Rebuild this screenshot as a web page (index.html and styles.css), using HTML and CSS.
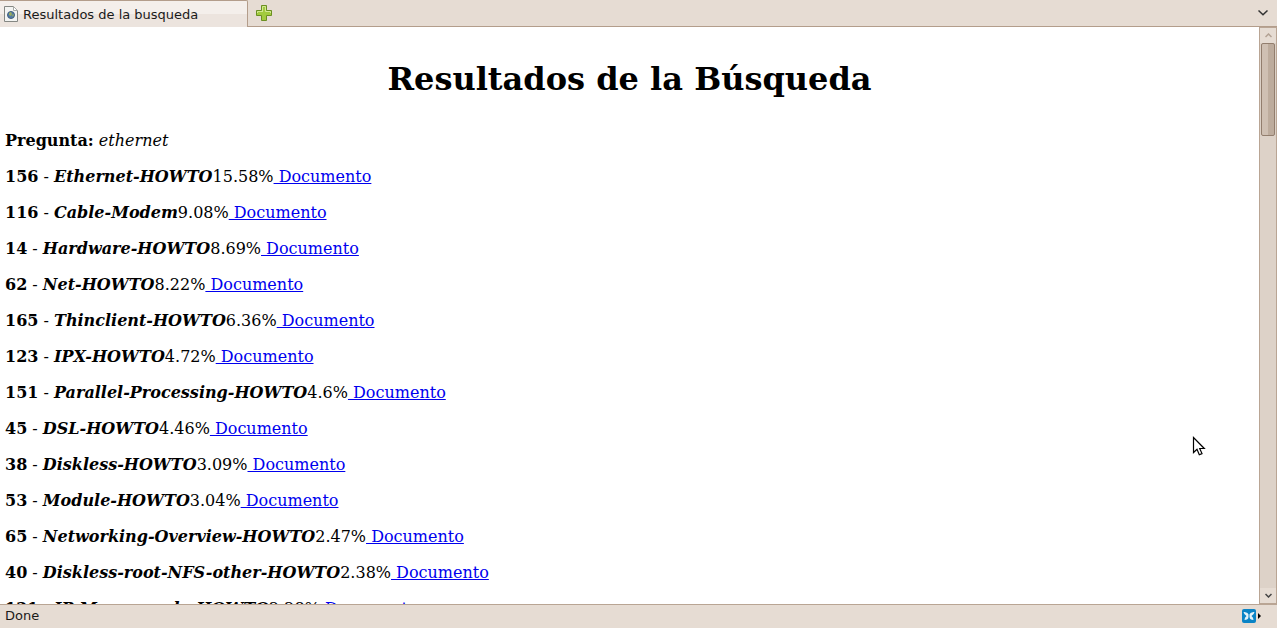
FILE: index.html
```html
<!DOCTYPE html>
<html lang="es">
<head>
<meta charset="utf-8">
<title>Resultados de la busqueda</title>
<link rel="stylesheet" href="styles.css">
</head>
<body class="browser">
<header class="tabbar">
  <button class="tab" type="button">
    <svg class="tab-icon" width="14" height="16" viewBox="0 0 14 16">
      <path d="M.5.5h9l4 4v11H.5z" fill="#f3f4f2" stroke="#858783"/>
      <path d="M9.500.5v4h4z" fill="#fff" stroke="#a8aaa6"/>
      <circle cx="7" cy="9" r="3.500" fill="#527aa8" stroke="#42607e"/>
      <path d="M5 7l2-1 1 2-1 2-2-1zM8 9l2-1-1 3z" fill="#9cae58"/>
    </svg>
    <span>Resultados de la busqueda</span>
  </button>
  <button class="icon-button new-tab" type="button" aria-label="Nueva pestaña">
    <svg width="16" height="16" viewBox="0 0 16 16">
      <path d="M5.500.5h5v5h5v5h-5v5h-5v-5h-5v-5h5z" fill="#a2cb3e" stroke="#6b8f22"/>
      <path d="M6.500 7V1.500h3v5h5V8M1.500 8V6.500h5" fill="none" stroke="#d2e893"/>
    </svg>
  </button>
  <button class="icon-button tab-list" type="button" aria-label="Lista de pestañas">
    <svg width="10" height="6" viewBox="0 0 10 6"><path d="M.5.5L5 4.800 9.500.5" fill="none" stroke="#333" stroke-width="1.500"/></svg>
  </button>
</header>
<div class="viewport">
  <main class="page">
    <h1 class="title">Resultados de la Búsqueda</h1>
    <p class="line"><b>Pregunta:</b> <i>ethernet</i></p>
    <p class="line"><b>156</b> - <b><i>Ethernet-HOWTO</i></b>15.58%<a href="#"> Documento</a></p>
    <p class="line"><b>116</b> - <b><i>Cable-Modem</i></b>9.08%<a href="#"> Documento</a></p>
    <p class="line"><b>14</b> - <b><i>Hardware-HOWTO</i></b>8.69%<a href="#"> Documento</a></p>
    <p class="line"><b>62</b> - <b><i>Net-HOWTO</i></b>8.22%<a href="#"> Documento</a></p>
    <p class="line"><b>165</b> - <b><i>Thinclient-HOWTO</i></b>6.36%<a href="#"> Documento</a></p>
    <p class="line"><b>123</b> - <b><i>IPX-HOWTO</i></b>4.72%<a href="#"> Documento</a></p>
    <p class="line"><b>151</b> - <b><i>Parallel-Processing-HOWTO</i></b>4.6%<a href="#"> Documento</a></p>
    <p class="line"><b>45</b> - <b><i>DSL-HOWTO</i></b>4.46%<a href="#"> Documento</a></p>
    <p class="line"><b>38</b> - <b><i>Diskless-HOWTO</i></b>3.09%<a href="#"> Documento</a></p>
    <p class="line"><b>53</b> - <b><i>Module-HOWTO</i></b>3.04%<a href="#"> Documento</a></p>
    <p class="line"><b>65</b> - <b><i>Networking-Overview-HOWTO</i></b>2.47%<a href="#"> Documento</a></p>
    <p class="line"><b>40</b> - <b><i>Diskless-root-NFS-other-HOWTO</i></b>2.38%<a href="#"> Documento</a></p>
    <p class="line"><b>121</b> - <b><i>IP-Masquerade-HOWTO</i></b>2.28%<a href="#"> Documento</a></p>
  </main>
  <div class="scrollbar">
    <button class="scroll-button" type="button" aria-label="Subir">
      <svg width="7" height="5" viewBox="0 0 7 5"><path d="M.5 4l3-3 3 3" fill="none" stroke="#b3a294" stroke-width="1.500"/></svg>
    </button>
    <div class="track"><div class="thumb"></div></div>
    <button class="scroll-button" type="button" aria-label="Bajar">
      <svg width="7" height="5" viewBox="0 0 7 5"><path d="M.5 1l3 3 3-3" fill="none" stroke="#444" stroke-width="1.500"/></svg>
    </button>
  </div>
</div>
<footer class="statusbar">
  <span>Done</span>
  <button class="icon-button addon" type="button" aria-label="Complemento">
    <svg width="20" height="14" viewBox="0 0 20 14">
      <rect width="14" height="14" rx="2" fill="#0a84c6"/>
      <path d="M1.500 3q3.500-.5 5.500 2.500 2-3 5.500-2.500-.5 2.500-3 4 2 1.500 2 4-3.500 0-4.500-3-1 3-4.500 3 0-2.500 2-4-2.500-1.500-3-4z" fill="#e4f3fa"/>
      <path d="M7 2v10" stroke="#0a84c6"/>
      <path d="M16 4l3 3-3 3z" fill="#000"/>
    </svg>
  </button>
</footer>
<svg class="pointer" width="14" height="21" viewBox="0 0 14 21">
  <path d="M1.500 1.500v15l3.500-3.300 2.300 5.600 2.700-1.200-2.300-5.100h4.600z" fill="#fff" stroke="#000" stroke-width="1.200"/>
</svg>
</body>
</html>
```
FILE: styles.css
```css
* { box-sizing: border-box; }
.browser {
  margin: 0;
  height: 100vh;
  display: flex;
  flex-direction: column;
  overflow: hidden;
  background: #e6dcd3;
  color: #1a1a1a;
  font-family: "DejaVu Sans", sans-serif;
  font-size: 13px;
}
button {
  margin: 0;
  padding: 0;
  border: 0;
  background: none;
  color: inherit;
  font: inherit;
}
svg { display: block; }
.tabbar {
  flex: none;
  display: flex;
  align-items: stretch;
  height: 27px;
  border-bottom: 1px solid #b39d8b;
}
.tab {
  display: flex;
  align-items: center;
  gap: 5px;
  width: 248px;
  height: 27px;
  padding: 0 4px;
  border-top: 1px solid #b39d8b;
  border-right: 1px solid #b39d8b;
  border-radius: 0 2px 0 0;
  background: linear-gradient(#f4efeb 0 50%, #ece4de 50%);
  white-space: nowrap;
}
.icon-button { display: flex; align-items: center; }
.new-tab { margin-left: 8px; }
.tab-list { margin-left: auto; padding-right: 9px; }
.viewport {
  flex: 1;
  min-height: 0;
  display: flex;
  background: #fff;
}
.page {
  flex: 1;
  min-width: 0;
  overflow: hidden;
  padding: 32px 5px 0;
  color: #000;
  font-family: "DejaVu Serif", serif;
  font-size: 16px;
  line-height: 20px;
}
.title {
  margin: 0 0 32px;
  text-align: center;
  font-size: 32px;
  line-height: 40px;
}
.line { margin: 0 0 16px; }
.line a { color: #0000ee; }
.scrollbar {
  flex: none;
  width: 18px;
  display: flex;
  flex-direction: column;
  border: 1px solid #b9a594;
  background: #ddd2c8;
}
.scroll-button {
  display: flex;
  align-items: center;
  justify-content: center;
  height: 15px;
  background: #e6dcd3;
}
.track { flex: 1; padding: 0 1px; }
.thumb {
  height: 17%;
  border: 1px solid #927e6e;
  border-radius: 2px;
  background: linear-gradient(90deg, #cfc0b3 0 50%, #bdac9d 50%);
}
.statusbar {
  flex: none;
  display: flex;
  align-items: center;
  justify-content: space-between;
  height: 24px;
  padding: 0 15px 2px 5px;
  border-top: 1px solid #b9a594;
}
.pointer {
  position: absolute;
  left: 1192px;
  top: 436px;
  pointer-events: none;
}
```
